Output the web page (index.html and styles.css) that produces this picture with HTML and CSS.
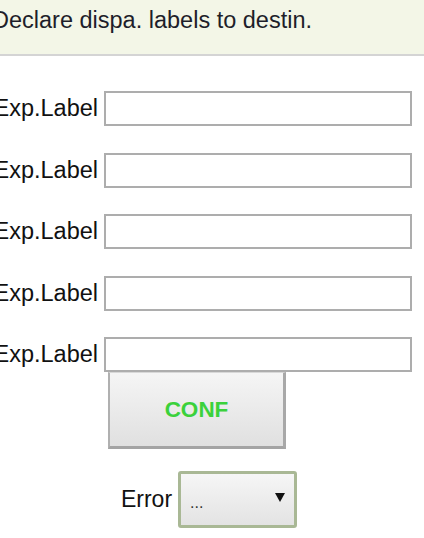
FILE: index.html
```html
<!DOCTYPE html>
<html>
<head>
<meta charset="utf-8">
<link rel="stylesheet" href="styles.css">
</head>
<body>
<div class="header"><span class="header-text">Declare dispa. labels to destin.</span></div>
<div class="fields">
  <div class="row"><div class="label"><span>Exp.Label</span></div><input class="input" type="text"></div>
  <div class="row"><div class="label"><span>Exp.Label</span></div><input class="input" type="text"></div>
  <div class="row"><div class="label"><span>Exp.Label</span></div><input class="input" type="text"></div>
  <div class="row"><div class="label"><span>Exp.Label</span></div><input class="input" type="text"></div>
  <div class="row"><div class="label"><span>Exp.Label</span></div><input class="input" type="text"></div>
</div>
<div class="actions"><button class="conf" type="button">CONF</button></div>
<div class="error-row">
  <span class="error-label">Error</span>
  <div class="select-wrap">
    <select class="select"><option>...</option></select>
    <svg class="arrow" width="10" height="9" viewBox="0 0 10 9"><path d="M0 0 H10 L5 9 Z" fill="#111"/></svg>
  </div>
</div>
</body>
</html>
```
FILE: styles.css
```css
html, body {
  margin: 0;
  padding: 0;
  background: #ffffff;
  font-family: "Liberation Sans", Arial, sans-serif;
  color: #111111;
}

.header {
  background: #f3f6e7;
  border-bottom: 2px solid #d4d4d4;
  height: 47px;
  padding-top: 7px;
  font-size: 23.5px;
  color: #1e1e2a;
  white-space: nowrap;
  overflow: hidden;
}

.header-text {
  margin-left: -8px;
}

.fields {
  display: flex;
  flex-direction: column;
  gap: 26.5px;
  margin-top: 35px;
}

.row {
  display: flex;
  align-items: center;
  gap: 6px;
}

.label {
  width: 98px;
  display: flex;
  justify-content: flex-end;
  font-size: 23.5px;
  white-space: nowrap;
  color: #111111;
}

.input {
  width: 308px;
  height: 35px;
  box-sizing: border-box;
  margin: 0;
  padding: 0;
  border: 2px solid #adadad;
  background: #ffffff;
}

.actions {
  padding-left: 108px;
}

.conf {
  display: block;
  width: 178px;
  height: 77px;
  box-sizing: border-box;
  margin: 0;
  padding: 0;
  border-top: 1px solid #d8d8d8;
  border-left: 2px solid #b0b0b0;
  border-right: 3px solid #a8a8a8;
  border-bottom: 3px solid #a4a4a4;
  background: linear-gradient(#f5f5f5, #e0e0e0);
  font-family: "Liberation Sans", Arial, sans-serif;
  font-weight: bold;
  font-size: 22.5px;
  color: #3bd13b;
}

.error-row {
  display: flex;
  justify-content: center;
  align-items: center;
  gap: 6px;
  margin-top: 22px;
  padding-right: 6px;
}

.error-label {
  font-size: 23px;
  color: #111111;
}

.select-wrap {
  position: relative;
  width: 119px;
  height: 57px;
}

.select {
  appearance: none;
  -webkit-appearance: none;
  width: 100%;
  height: 100%;
  box-sizing: border-box;
  margin: 0;
  padding: 6px 0 0 9px;
  border: 3px solid #a9b895;
  border-radius: 3px;
  background: linear-gradient(#f6f6f6, #e3e3e3);
  font-family: "Liberation Sans", Arial, sans-serif;
  font-size: 16px;
  color: #333333;
}

.arrow {
  position: absolute;
  right: 12px;
  top: 22px;
  pointer-events: none;
}
```
